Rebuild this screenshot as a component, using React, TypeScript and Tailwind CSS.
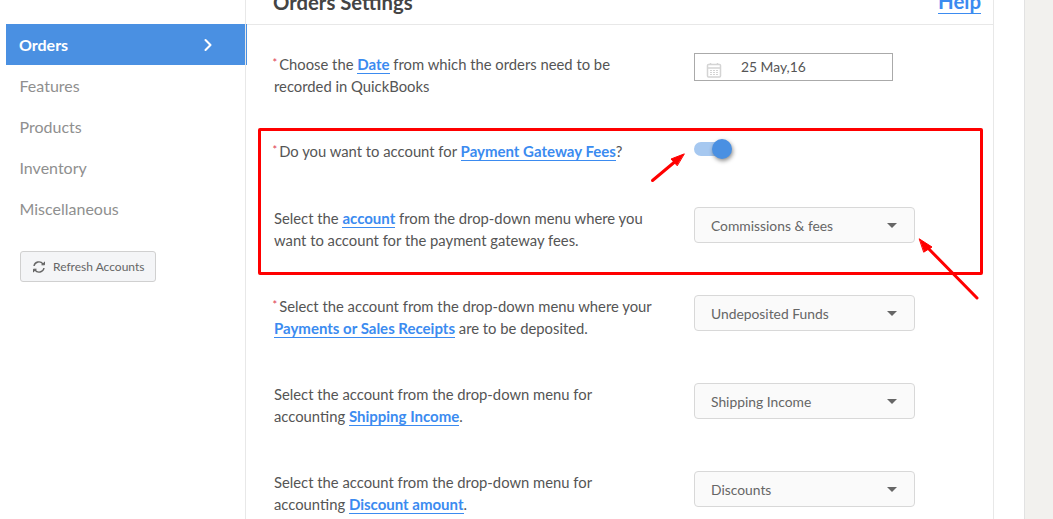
import { ChevronRight } from 'lucide-react'
import type { ReactNode } from 'react'

const navItems = ['Features', 'Products', 'Inventory', 'Miscellaneous']

function Req() {
  return <span className="relative -top-[3px] -ml-[1.5px] mr-[2px] text-[11px] leading-none text-[#e0394f]">*</span>
}

function Lnk({ children }: { children: ReactNode }) {
  return <a className="border-b border-[#3b8bf0] text-[15px] font-bold text-[#3b8bf0]">{children}</a>
}

function SelectBox({ label }: { label: string }) {
  return (
    <div className="flex h-[36px] w-[221px] items-center justify-between rounded-[4px] border border-[#d8d8d8] bg-[#fafafa] pl-[16px] pr-[17px] text-[13.85px] text-[#666]">
      <span className="pt-[1px]">{label}</span>
      <span className="h-0 w-0 border-x-[5px] border-t-[5px] border-x-transparent border-t-[#666]"></span>
    </div>
  )
}

function Row({ className = '', left, right }: { className?: string; left: ReactNode; right: ReactNode }) {
  return (
    <div className={`flex ${className}`}>
      <div className="w-[420px] shrink-0 pr-[38px]">{left}</div>
      <div>{right}</div>
    </div>
  )
}

export default function App() {
  return (
    <div className="relative flex h-[519px] overflow-hidden bg-white font-['Lato','Liberation_Sans',sans-serif] text-[14.8px] leading-[22px] text-[#555]">
      {/* Sidebar */}
      <aside className="w-[245px] shrink-0 pl-[6px] pt-[24px] text-[16px]">
        <div className="flex h-[41px] w-[239px] items-center justify-between bg-[#4a90e2] pl-[13px] pr-[27px] font-bold text-white">
          <span>Orders</span>
          <ChevronRight size={20} strokeWidth={2.5} />
        </div>
        {navItems.map((item) => (
          <div key={item} className="flex h-[41px] items-center pl-[13.5px] text-[#8f8f8f]">
            {item}
          </div>
        ))}
        <button className="ml-[14px] mt-[22px] flex h-[31px] w-[136px] items-center rounded-[3px] border border-[#d0d0d0] bg-[#f4f5f7] pl-[11px] text-[12px] text-[#666]">
          <svg width="14" height="14" viewBox="0 0 14 14" fill="none" stroke="currentColor" strokeWidth="1.4" className="mr-[7px]">
            <path d="M2 6a5 5 0 0 1 9-2" />
            <path d="M12 8a5 5 0 0 1-9 2" />
            <path d="M9.5 4.8h3V1.8M4.5 9.2h-3v3" strokeWidth="1" fill="currentColor" />
          </svg>
          Refresh Accounts
        </button>
      </aside>

      {/* Main panel */}
      <main className="w-[749px] shrink-0 border-x border-[#e8e8e8]">
        <header className="flex h-[25px] items-end justify-between overflow-hidden border-b border-[#e8e8e8] pl-[27px] pr-[12px]">
          <h2 className="mb-[7px] text-[20.3px] font-bold leading-[30px] text-[#444]">Orders Settings</h2>
          <a className="mb-[10px] border-b border-[#3b8bf0] text-[20.4px] font-bold leading-[24px] text-[#3b8bf0]">Help</a>
        </header>

        <div className="pl-[28px] pt-[28px]">
          <Row
            className="h-[87px]"
            left={
              <p>
                <Req />
                Choose the <Lnk>Date</Lnk> from which the orders need to be recorded in QuickBooks
              </p>
            }
            right={
              <div className="flex h-[28px] w-[199px] items-center border border-[#aaa] pl-[11px] text-[13.85px]">
                <svg width="16" height="16" viewBox="0 0 16 16" className="mr-[19px] mt-[6px] text-[#d4d4d4]" fill="none" stroke="currentColor">
                  <rect x="1.5" y="2.5" width="13" height="12.5" rx="1" strokeWidth="1.5" />
                  <path d="M1.5 6h13M4.5 1v2M11.5 1v2" strokeWidth="1.5" />
                  <path d="M4 8.5h8M4 10.5h8M4 12.5h8" strokeWidth="1" strokeDasharray="2 1" />
                </svg>
                25 May,16
              </div>
            }
          />
          <Row
            className="h-[67px]"
            left={
              <p>
                <Req />
                Do you want to account for <Lnk>Payment Gateway Fees</Lnk>?
              </p>
            }
            right={
              <div className="relative h-[14px] w-[28px] translate-y-[2px] rounded-full bg-[#a6c8f0]">
                <span className="absolute left-[18px] top-[-3px] h-[20px] w-[20px] rounded-full bg-[#4a90e2] shadow-[1px_2px_4px_rgba(0,0,0,0.45)]"></span>
              </div>
            }
          />
          <Row
            className="h-[88px]"
            left={
              <p>
                Select the <Lnk>account</Lnk> from the drop-down menu where you want to account for the payment gateway fees.
              </p>
            }
            right={<SelectBox label="Commissions & fees" />}
          />
          <Row
            className="h-[88px]"
            left={
              <p>
                <Req />
                Select the account from the drop-down menu where your <Lnk>Payments or Sales Receipts</Lnk> are to be deposited.
              </p>
            }
            right={<SelectBox label="Undeposited Funds" />}
          />
          <Row
            className="h-[88px]"
            left={
              <p>
                Select the account from the drop-down menu for accounting <Lnk>Shipping Income</Lnk>.
              </p>
            }
            right={<SelectBox label="Shipping Income" />}
          />
          <Row
            className="h-[88px]"
            left={
              <p>
                Select the account from the drop-down menu for accounting <Lnk>Discount amount</Lnk>.
              </p>
            }
            right={<SelectBox label="Discounts" />}
          />
        </div>
      </main>

      {/* Right gutter */}
      <div className="ml-[30px] flex-1 border-l border-[#e2e2e2] bg-[#f2f1ee]"></div>

      {/* Active tab marker on the panel edge */}
      <div className="absolute left-[246px] top-[24px] h-[41px] w-px bg-[#4a90e2]"></div>

      {/* Annotation overlay */}
      <div className="absolute left-[258px] top-[128px] h-[147px] w-[725px] rounded-[2px] border-[3px] border-[#ff0000]"></div>
      <svg className="absolute left-0 top-0" width="1053" height="519" fill="#ff0000" stroke="#ff0000" strokeLinecap="round">
        <path d="M652.5 180.5L677 160" strokeWidth="3" fill="none" />
        <path d="M684 154L671 159L677 165.5Z" strokeWidth="1" />
        <path d="M977 298L926 246" strokeWidth="3" fill="none" />
        <path d="M919.5 239L932 247L924 252Z" strokeWidth="1" />
      </svg>
    </div>
  )
}
